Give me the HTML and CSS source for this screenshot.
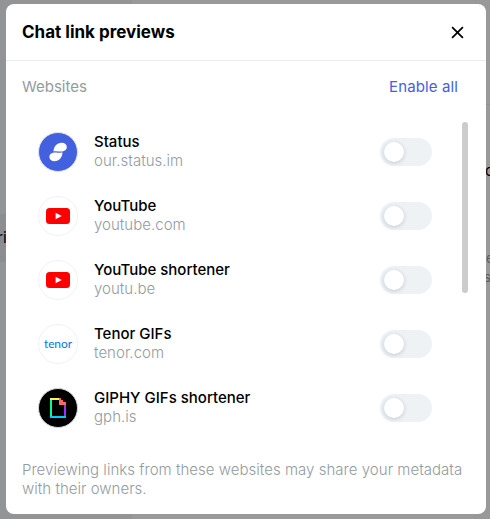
FILE: index.html
```html
<!DOCTYPE html>
<html lang="en">
<head>
<meta charset="utf-8">
<title>Chat link previews</title>
<link rel="stylesheet" href="styles.css">
</head>
<body>
<div class="backdrop" aria-hidden="true">
  <div class="nav"><div class="nav-item">ri</div></div>
  <div class="content"><div class="rule"></div><span class="peek peek-title">c</span><span class="peek peek-e">e</span><span class="peek peek-s">s</span></div>
</div>
<main class="modal">
  <header class="header">
    <h1>Chat link previews</h1>
    <svg class="close" viewBox="0 0 12 12"><path d="M1 1l10 10M11 1L1 11"/></svg>
  </header>
  <div class="section">
    <span class="label">Websites</span>
    <a class="enable">Enable all</a>
  </div>
  <div class="scroll">
    <ul class="list">
      <li class="site">
        <svg class="icon" viewBox="0 0 40 40"><circle cx="20" cy="20" r="19.5" fill="#4360df" stroke="#dfe4f7"/><path fill="#fff" d="M15.500 19.400C15.700 14.600 18.900 10.700 23.600 10.700c3.200 0 5.200 1.800 5.200 4.300 0 2.900-2.400 4.500-5.800 4.500-2.700 0-4.500-.5-7.500-.1zM24.500 20.600C24.300 25.400 21.100 29.300 16.600 29.300c-3.200 0-5.200-1.800-5.200-4.300 0-2.900 2.400-4.500 5.800-4.500 2.700 0 4.300.5 7.300.1z"/></svg>
        <div class="text"><div class="name">Status</div><div class="url">our.status.im</div></div><span class="toggle"></span>
      </li>
      <li class="site">
        <svg class="icon" viewBox="0 0 40 40"><circle cx="20" cy="20" r="19.5" fill="#fff" stroke="#eef2f5"/><rect x="8" y="12" width="24" height="16" rx="3.500" fill="#f00"/><path fill="#fff" d="M17.600 16.700v6.600l6.200-3.300z"/></svg>
        <div class="text"><div class="name">YouTube</div><div class="url">youtube.com</div></div><span class="toggle"></span>
      </li>
      <li class="site">
        <svg class="icon" viewBox="0 0 40 40"><circle cx="20" cy="20" r="19.5" fill="#fff" stroke="#eef2f5"/><rect x="8" y="12" width="24" height="16" rx="3.500" fill="#f00"/><path fill="#fff" d="M17.600 16.700v6.600l6.200-3.300z"/></svg>
        <div class="text"><div class="name">YouTube shortener</div><div class="url">youtu.be</div></div><span class="toggle"></span>
      </li>
      <li class="site">
        <svg class="icon" viewBox="0 0 40 40"><circle cx="20" cy="20" r="19.5" fill="#fff" stroke="#eef2f5"/><text class="tenor" x="20" y="24" text-anchor="middle" textLength="28">tenor</text></svg>
        <div class="text"><div class="name">Tenor GIFs</div><div class="url">tenor.com</div></div><span class="toggle"></span>
      </li>
      <li class="site">
        <svg class="icon" viewBox="0 0 40 40"><circle cx="20" cy="20" r="19.5" fill="#000" stroke="#d4d6d8"/><path fill="#fff35c" d="M12 10h10v2H12z"/><path fill="#00ff99" d="M12 12h2v16h-2z"/><path fill="#00ccff" d="M12 28h16v2H12z"/><path fill="#9933ff" d="M26 17h2v11h-2z"/><path fill="#ff6666" d="M21 10h2v2h2v2h3v3h-7z"/></svg>
        <div class="text"><div class="name">GIPHY GIFs shortener</div><div class="url">gph.is</div></div><span class="toggle"></span>
      </li>
    </ul>
    <div class="thumb"></div>
  </div>
  <p class="note">Previewing links from these websites may share your metadata with their owners.</p>
</main>
</body>
</html>
```
FILE: styles.css
```css
* { box-sizing: border-box; }
body {
  margin: 0;
  width: 490px;
  height: 519px;
  overflow: hidden;
  padding: 4px 4px 5px 6px;
  font: 15px/19px Inter, "Liberation Sans", sans-serif;
  color: #000;
}
.backdrop { position: absolute; inset: 0; display: flex; background: #999; overflow: hidden; }
.nav { width: 132px; background: #939496; padding-top: 214px; }
.nav-item { height: 48px; background: #8b8d91; line-height: 48px; font-weight: 500; color: #101318; text-indent: -3px; }
.content { flex: 1; padding-top: 104px; }
.rule { height: 1px; background: #8f9193; }
.peek { position: absolute; left: 485px; }
.peek-title { top: 161px; }
.peek-e { top: 249px; left: 486px; font-size: 13px; color: #585d61; }
.peek-s { top: 268px; left: 484px; font-size: 13px; color: #585d61; }
.modal {
  position: relative;
  display: flex;
  flex-direction: column;
  width: 480px;
  height: 510px;
  background: #fff;
  border-radius: 8px;
}
.header {
  display: flex;
  align-items: center;
  justify-content: space-between;
  height: 57px;
  padding: 0 22px 0 16px;
  border-bottom: 1px solid #e9ecef;
}
h1 { margin: 0; font-size: 17px; line-height: 22px; font-weight: 700; }
.close { width: 13px; height: 13px; fill: none; stroke: #000; stroke-width: 1.6; }
.section { display: flex; justify-content: space-between; padding: 16px 28px 0 16px; height: 57px; }
.label, .url, .note { color: #939ba1; font-weight: 300; }
.label { font-weight: 400; }
.enable { color: #4360df; font-weight: 400; letter-spacing: .12px; }
.scroll { display: flex; justify-content: space-between; height: 326px; padding-right: 18px; }
.list { list-style: none; margin: 0; padding: 2px 0 0 32px; width: 426px; }
.site { display: flex; align-items: center; height: 64px; }
.icon { width: 40px; height: 40px; margin-right: 16px; }
.text { flex: 1; padding-bottom: 2px; }
.url { letter-spacing: .03px; }
.name { font-weight: 500; }
.tenor { font: 400 12px Lato, sans-serif; fill: #007add; }
.toggle { width: 52px; height: 28px; padding: 4px; border-radius: 14px; background: #eef2f5; }
.toggle::before {
  content: "";
  display: block;
  width: 20px;
  height: 20px;
  border-radius: 50%;
  background: #fff;
  box-shadow: 0 1px 4px rgba(0, 34, 61, .2);
}
.thumb { width: 6px; height: 171px; margin-top: 4px; border-radius: 3px; background: #ccc; }
.note { margin: 16px 16px 0; letter-spacing: .03px; }
```
